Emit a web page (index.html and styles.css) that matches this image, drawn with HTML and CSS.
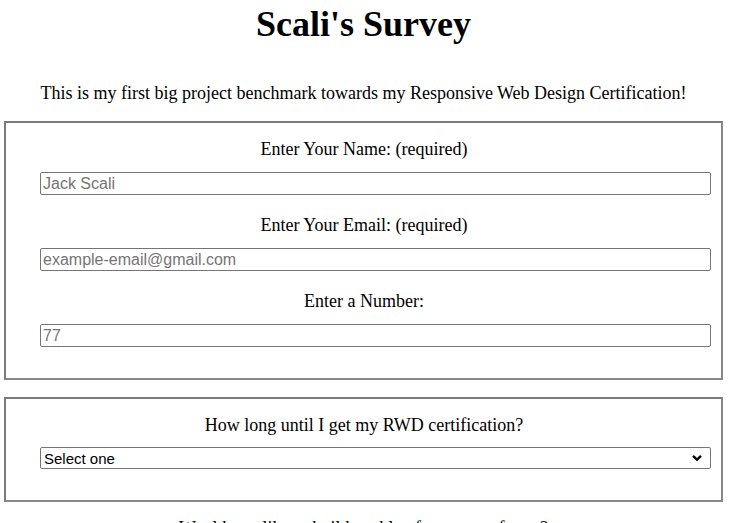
FILE: index.html
```html
<!DOCTYPE html>
<html lang="en">
<head>
<meta charset="utf-8">
<title>Scali's Survey</title>
<link rel="stylesheet" href="styles.css">
</head>
<body>
<h1 class="title" id="title">Scali's Survey</h1>
<p class="description" id="description">This is my first big project benchmark towards my Responsive Web Design Certification!</p>
<form class="survey" id="survey-form">
  <fieldset class="group">
    <label class="field-label" for="name" id="name-label">Enter Your Name: (required)</label>
    <input class="field" id="name" type="text" placeholder="Jack Scali" required>
    <label class="field-label" for="email" id="email-label">Enter Your Email: (required)</label>
    <input class="field" id="email" type="email" placeholder="example-email@gmail.com" required>
    <label class="field-label" for="number" id="number-label">Enter a Number:</label>
    <input class="field" id="number" type="number" placeholder="77">
  </fieldset>
  <fieldset class="group group-select">
    <label class="field-label" for="dropdown">How long until I get my RWD certification?</label>
    <div class="select-wrap">
      <select class="field select" id="dropdown">
        <option>Select one</option>
        <option>A week</option>
        <option>A month</option>
        <option>A year</option>
      </select>
      <svg class="chevron" width="12" height="8" viewBox="0 0 12 8" aria-hidden="true">
        <path d="M2 1.8 L6 5.6 L10 1.8" fill="none" stroke="#000" stroke-width="2.4" stroke-linecap="butt" stroke-linejoin="miter"/>
      </svg>
    </div>
  </fieldset>
  <p class="question">Would you like to build a table of your own for us?</p>
</form>
</body>
</html>
```
FILE: styles.css
```css
html, body {
  margin: 0;
  background: #fff;
}
body {
  padding: 0 7px 0 4px;
  font-family: "Liberation Serif", "Times New Roman", serif;
  color: #000;
}
.title {
  margin: 4px 0 0;
  font-size: 36px;
  font-weight: bold;
  text-align: center;
  line-height: 41px;
}
.description {
  margin: 38px 0 0;
  font-size: 18px;
  line-height: 21px;
  text-align: center;
}
.survey {
  margin: 17px 0 0;
}
.group {
  margin: 0;
  padding: 16px 10px 31px 34px;
  border: 2px solid #7b7b7b;
  border-right-color: #888;
  border-bottom-color: #888;
  display: flex;
  flex-direction: column;
  min-width: 0;
}
.group-select {
  margin-top: 17px;
  padding-bottom: 31px;
}
.field-label {
  display: block;
  font-size: 18px;
  line-height: 21px;
  text-align: center;
  margin: 0 0 12px -23px;
}
.field {
  box-sizing: border-box;
  width: 100%;
  height: 23px;
  margin: 0 0 20px;
  padding: 1px 2px;
  border: 1px solid #767676;
  border-radius: 2px;
  font-family: "Liberation Sans", Arial, sans-serif;
  font-size: 16px;
  color: #000;
  background: #fff;
}
.group .field:last-child {
  margin-bottom: 0;
}
.field::placeholder {
  color: #757575;
}
.select-wrap {
  position: relative;
}
.select {
  display: block;
  height: 22px;
  margin: 0;
  padding: 0 0 0 3px;
  font-size: 15px;
  -webkit-appearance: none;
  appearance: none;
}
.chevron {
  position: absolute;
  right: 8px;
  top: 7px;
  pointer-events: none;
}
.group-select .field-label {
  margin-bottom: 11px;
}
.question {
  margin: 16px 0 0;
  font-size: 18px;
  line-height: 21px;
  text-align: center;
}
```
